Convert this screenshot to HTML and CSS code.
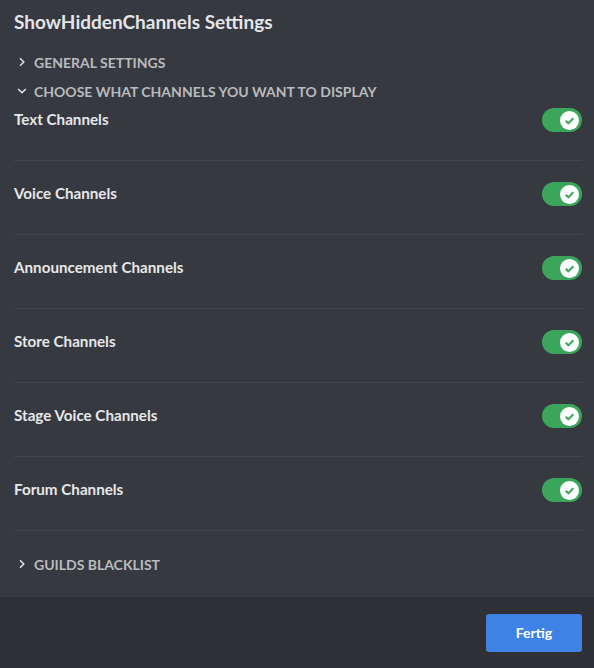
FILE: index.html
```html
<!DOCTYPE html>
<html>
<head>
<meta charset="utf-8">
<link rel="stylesheet" href="styles.css">
</head>
<body>
<div class="modal">
  <div class="content">
    <h1 class="title">ShowHiddenChannels Settings</h1>
    <div class="section-head first">
      <svg class="chev" viewBox="0 0 10 10" width="10" height="10"><path d="M3 1.2 L6.8 5 L3 8.8" fill="none" stroke="#e3e5e8" stroke-width="1.5"/></svg>
      <span>General Settings</span>
    </div>
    <div class="section-head">
      <svg class="chev" viewBox="0 0 10 10" width="10" height="10"><path d="M1.2 3 L5 6.8 L8.8 3" fill="none" stroke="#e3e5e8" stroke-width="1.5"/></svg>
      <span>Choose what channels you want to display</span>
    </div>
    <div class="items">
      <div class="item"><span class="label">Text Channels</span><span class="toggle"><span class="knob"><svg viewBox="0 0 20 20"><path d="M6 10.2 L8.8 13 L14 7.6" fill="none" stroke="#3ba55c" stroke-width="2.2"/></svg></span></span></div>
      <div class="item"><span class="label">Voice Channels</span><span class="toggle"><span class="knob"><svg viewBox="0 0 20 20"><path d="M6 10.2 L8.8 13 L14 7.6" fill="none" stroke="#3ba55c" stroke-width="2.2"/></svg></span></span></div>
      <div class="item"><span class="label">Announcement Channels</span><span class="toggle"><span class="knob"><svg viewBox="0 0 20 20"><path d="M6 10.2 L8.8 13 L14 7.6" fill="none" stroke="#3ba55c" stroke-width="2.2"/></svg></span></span></div>
      <div class="item"><span class="label">Store Channels</span><span class="toggle"><span class="knob"><svg viewBox="0 0 20 20"><path d="M6 10.2 L8.8 13 L14 7.6" fill="none" stroke="#3ba55c" stroke-width="2.2"/></svg></span></span></div>
      <div class="item"><span class="label">Stage Voice Channels</span><span class="toggle"><span class="knob"><svg viewBox="0 0 20 20"><path d="M6 10.2 L8.8 13 L14 7.6" fill="none" stroke="#3ba55c" stroke-width="2.2"/></svg></span></span></div>
      <div class="item"><span class="label">Forum Channels</span><span class="toggle"><span class="knob"><svg viewBox="0 0 20 20"><path d="M6 10.2 L8.8 13 L14 7.6" fill="none" stroke="#3ba55c" stroke-width="2.2"/></svg></span></span></div>
    </div>
    <div class="section-head last">
      <svg class="chev" viewBox="0 0 10 10" width="10" height="10"><path d="M3 1.2 L6.8 5 L3 8.8" fill="none" stroke="#e3e5e8" stroke-width="1.5"/></svg>
      <span>Guilds Blacklist</span>
    </div>
  </div>
  <div class="footer">
    <button class="btn">Fertig</button>
  </div>
</div>
</body>
</html>
```
FILE: styles.css
```css
html, body {
  margin: 0;
  padding: 0;
  background: #36393f;
}
body {
  font-family: "Lato", "Open Sans", sans-serif;
  width: 594px;
  height: 668px;
  overflow: hidden;
}
.modal {
  display: flex;
  flex-direction: column;
  height: 668px;
}
.content {
  flex: 1;
  padding: 8px 12px 0 14px;
  background: #36393f;
}
.title {
  margin: 0;
  font-size: 19px;
  font-weight: 700;
  line-height: 28px;
  color: #e3e5e8;
}
.section-head {
  display: flex;
  align-items: center;
  height: 20px;
  margin-top: 9px;
  gap: 7px;
  padding-left: 3px;
  color: #b9bbbe;
  font-size: 14px;
  font-weight: 700;
  text-transform: uppercase;
}
.section-head.first {
  margin-top: 16px;
}
.section-head.last {
  margin-top: 23px;
}
.chev {
  flex: none;
}
.items {
  display: flex;
  flex-direction: column;
}
.item {
  display: flex;
  align-items: center;
  justify-content: space-between;
  padding: 21px 0 28px;
  border-bottom: 1px solid #42454c;
}
.item:first-child {
  padding-top: 7px;
}
.label {
  color: #e6e7e9;
  font-size: 15.2px;
  font-weight: 700;
  margin-top: -2px;
}
.toggle {
  width: 40px;
  height: 24px;
  border-radius: 12px;
  background: #3ba55c;
  display: flex;
  align-items: center;
  justify-content: flex-end;
  padding-right: 3px;
  box-sizing: border-box;
}
.knob {
  width: 19px;
  height: 19px;
  border-radius: 50%;
  background: #fff;
  display: flex;
  align-items: center;
  justify-content: center;
}
.knob svg {
  width: 19px;
  height: 19px;
}
.footer {
  height: 71px;
  background: #2f3136;
  display: flex;
  align-items: center;
  justify-content: flex-end;
  padding-right: 12px;
}
.btn {
  width: 96px;
  height: 38px;
  border: none;
  border-radius: 3px;
  background: #3e82e5;
  color: #fff;
  font-family: "Lato", "Open Sans", sans-serif;
  font-size: 14px;
  font-weight: 700;
}
```
